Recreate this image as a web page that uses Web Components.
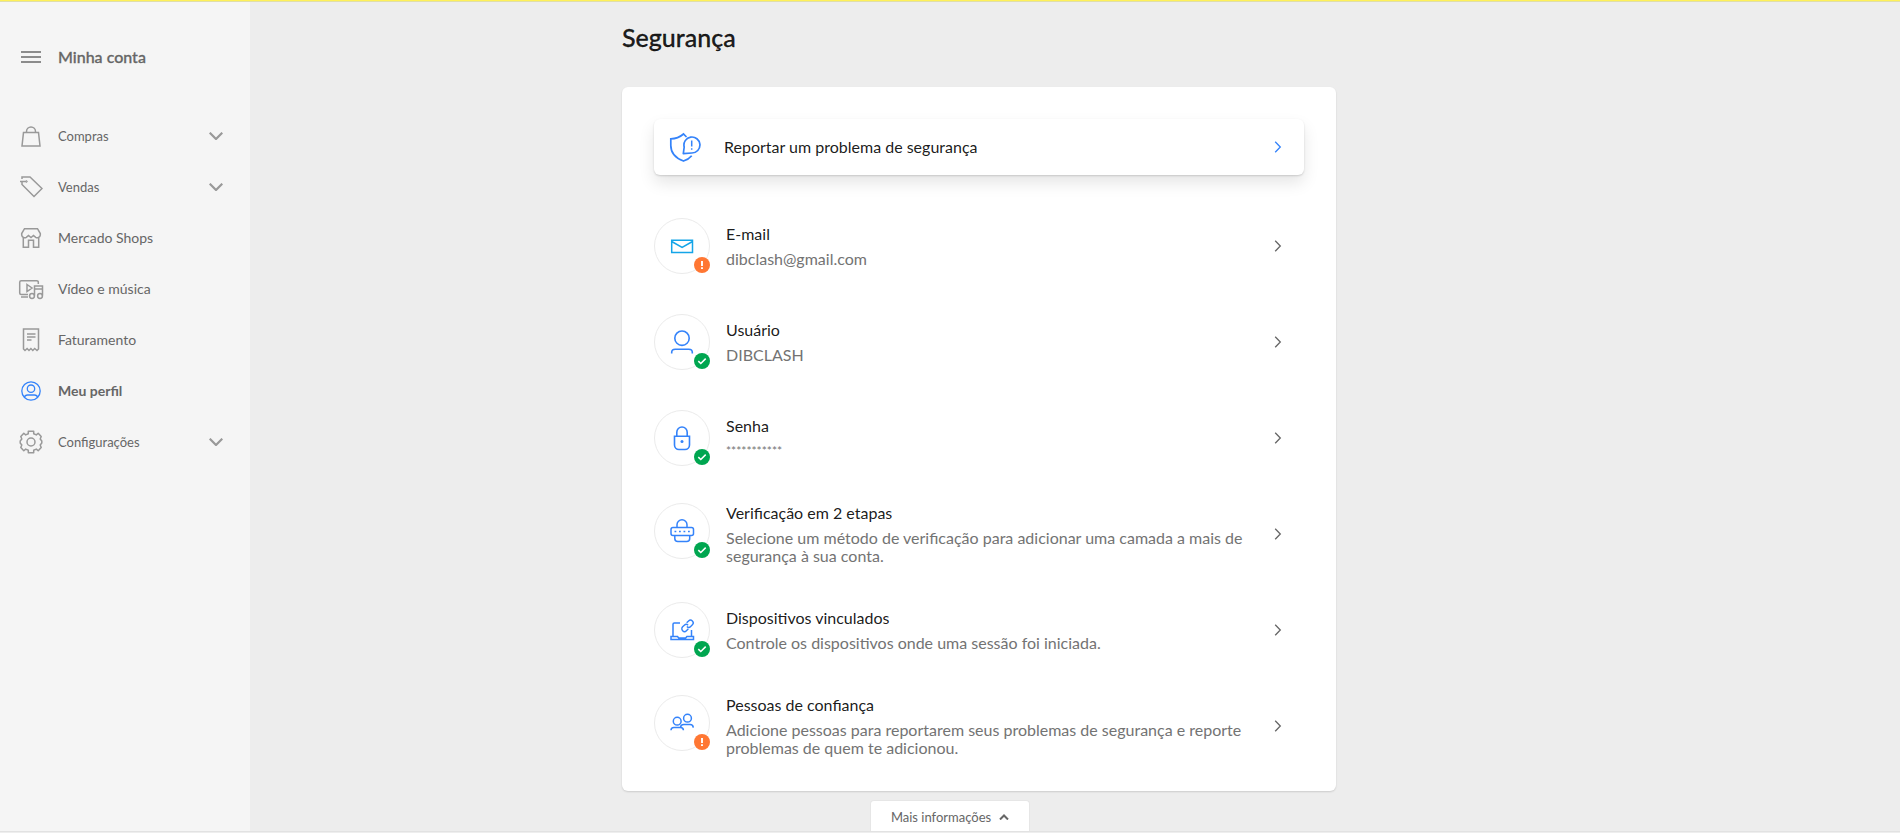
<!DOCTYPE html>
<html lang="pt-BR">
<head>
<meta charset="utf-8">
<meta name="viewport" content="width=device-width, initial-scale=1">
<title>Segurança</title>
<style>
html, body { margin: 0; }
body { font-family: Lato, "Open Sans", sans-serif; font-size: 16px; color: rgba(0,0,0,.9); background: #ededed; }
</style>
</head>
<body>
<script>
const ICONS = {
  menu: [20, 12, '<path d="M0 1h20M0 6h20M0 11h20" stroke-width="2"/>'],
  bag: [24, 24, '<path d="M4.500 8.500h15l1.500 13.500H3z M7.500 8.500V7.500a4.500 4.500 0 0 1 9 0v1" stroke-width="1.500"/>'],
  tag: [24, 24, '<path d="M3 4V2h8L23 13.500 15 21.500 3 9.500V7" stroke-width="1.500"/><path d="M1 6.500h6.500" stroke-width="1.500"/><circle cx="7.500" cy="6.500" r=".8" stroke-width="1"/>'],
  shop: [24, 24, '<path d="M5.500 2.700h13l2.800 4.800v1.700a3 3 0 0 1-4.600 2.100L14.500 9.500 12 11.500 9.500 9.500 7.300 11.300a3 3 0 0 1-4.600-2.100V7.500z M4.300 11.800v9.400h5.200v-7h5v7h5.200v-9.400" stroke-width="1.500"/>'],
  media: [26, 24, '<path d="M10 17.500H3.200a1.500 1.500 0 0 1-1.500-1.500V5.200a1.500 1.500 0 0 1 1.500-1.500h15.600a1.500 1.500 0 0 1 1.500 1.500V7 M3 20h7M9 7.500l5 3.500-5 3.500z" stroke-width="1.500"/><path d="M16.500 18.500V9h8v9.500M16.500 12h8" stroke-width="1.500"/><circle cx="14" cy="19" r="2.400" stroke-width="1.500"/><circle cx="22" cy="19" r="2.400" stroke-width="1.500"/>'],
  bill: [24, 24, '<path d="M4.500 1h15v20l-1.500 1.500-2.300-2-1.900 2-1.900-2-1.900 2-1.900-2-2.100 2-1.500-1.500z" stroke-width="1.500"/><path d="M8 6h8.500M8 9h8.500M8 12h4.500" stroke-width="1.400"/>'],
  profile: [24, 24, '<circle cx="12" cy="12" r="9.200" stroke-width="1.300"/><circle cx="12" cy="9.700" r="3.700" stroke-width="1.300"/><path d="M5.500 18.300c.3-1.700 1.200-2.300 3-2.300h7c1.800 0 2.700.6 3 2.300" stroke-width="1.300"/>'],
  gear: [24, 24, '<path d="M9.300 1.200h5.400v2.600l2.600 1.100 1.900-1.700 3 3.200-1 2.600 1.600 2v2l-1.600 2 1 2.600-3 3.200-1.900-1.700-2.600 1.100v2.600H9.300v-2.600l-2.600-1.100-1.900 1.700-3-3.200 1-2.600-1.600-2v-2l1.600-2-1-2.600 3-3.200 1.900 1.700 2.600-1.100z" stroke-linejoin="round" stroke-width="1.500"/><circle cx="12" cy="12" r="4" stroke-width="1.500"/>'],
  down: [14, 8, '<path d="M.7.7 7 7 13.300.7" stroke-width="2.200"/>'],
  right: [8, 12, '<path d="m1.200.7 5.100 5.300-5.100 5.300" stroke-width="1.300"/>'],
  up: [10, 6, '<path d="m1 5.500 4-4 4 4" stroke-width="2"/>'],
  shield: [32, 32, '<path d="M17.500 6 14.500 3C10.500 6.500 6.500 7.800 1.800 7.800v6.700c0 7.700 5 12.700 12.700 15.500 3.700-1.200 6.300-3 8.200-5.300" stroke-width="1.700"/><path d="M14.300 22.700 15.200 16A8 8 0 1 1 22.800 22z" stroke-width="1.700" stroke-linejoin="round"/><path d="M22.700 9.500v6M22.700 17.200v1.500" stroke-width="1.500"/>'],
  mail: [28, 28, '<path d="M3.700 8.200h20.800v12.300H3.700z M3.700 9.500l10.400 6 10.400-6" stroke-width="1.500"/>'],
  user: [28, 28, '<circle cx="14" cy="10.200" r="7.200" stroke-width="1.600"/><path d="M3.700 25.500v-1.300c0-1.900 1.300-3 3.500-3h13.600c2.200 0 3.500 1.100 3.500 3v1.300" stroke-width="1.600"/>'],
  lock: [28, 28, '<path d="M6.500 12.300h15v8.700a4.500 4.500 0 0 1-4.500 4.500h-6a4.500 4.500 0 0 1-4.500-4.500z M8.800 12.300V8.200a5.200 5.200 0 0 1 10.400 0v4.100" stroke-width="1.600"/><circle cx="14" cy="17.500" r="1.500" fill="currentColor" stroke="none"/>'],
  code: [28, 28, '<rect x="3" y="10.500" width="22.500" height="8" rx="2" stroke-width="1.500"/><path d="M9 10.500V7.700a5 5 0 0 1 10 0v2.800 M6.800 18.500v3c0 1.700 1.200 3 3 3h8.900c1.800 0 3-1.300 3-3v-3" stroke-width="1.500"/><path d="M6.500 14.500h1.800M11 14.500h1.800M15.500 14.500h1.800M20 14.500h1.800" stroke-width="1.700"/>'],
  laptop: [28, 28, '<path d="M12 7H6.300A1.300 1.300 0 0 0 5 8.300v11.900M23.500 14v6.200M3 20.500h6.500l1.200 1.500h7l1.200-1.500h6.600v3H3z" stroke-width="1.500"/><g transform="rotate(-45 19.500 9.800)" stroke-width="1.400"><path d="M18 12.500h-2.700a2.700 2.700 0 0 1 0-5.400h2.400a2.700 2.700 0 0 1 2.700 2.700"/><path d="M21 7.100h2.700a2.700 2.700 0 0 1 0 5.400h-2.400a2.700 2.700 0 0 1-2.700-2.700"/></g>'],
  people: [28, 28, '<circle cx="9.200" cy="12.200" r="3.900" stroke-width="1.500"/><circle cx="19.500" cy="9.200" r="3.900" stroke-width="1.500"/><path d="M3 21.300c0-2 1-2.900 2.900-2.900h6.600c1.900 0 2.900.9 2.900 2.900 M12.500 18.300c.3-1.700 1.500-2.700 3.300-2.700h6.300c2 0 3 .9 3.200 3" stroke-width="1.500"/>'],
  ok: [16, 16, '<circle cx="8" cy="8" r="8" fill="#00a650" stroke="none"/><path d="m4.300 8.100 2.500 2.400 4.900-4.900" stroke="#fff" stroke-width="1.500"/>'],
  alert: [16, 16, '<circle cx="8" cy="8" r="8" fill="#ff7733" stroke="none"/><path d="M8 4v5M8 10.300v1.700" stroke="#fff" stroke-width="1.900"/>']
};

class UiIcon extends HTMLElement {
  connectedCallback() {
    const [w, h, body] = ICONS[this.getAttribute('name')];
    this.attachShadow({ mode: 'open' }).innerHTML =
      `<style>:host{display:block;flex:none}svg{display:block}</style>
       <svg width="${w}" height="${h}" viewBox="0 0 ${w} ${h}" fill="none" stroke="currentColor" aria-hidden="true">${body}</svg>`;
  }
}
customElements.define('ui-icon', UiIcon);

class NavItem extends HTMLElement {
  connectedCallback() {
    const expand = this.hasAttribute('expandable');
    const tag = expand ? 'button type="button" aria-expanded="false"' : 'a href="#"';
    this.attachShadow({ mode: 'open' }).innerHTML = `
      <style>
        :host { display: block; }
        a, button {
          box-sizing: border-box; width: 100%; height: 51px; margin: 0; border: 0; background: none;
          padding: 0 27px 0 19px; display: flex; align-items: center; gap: 15px;
          font: inherit; font-size: 14px; line-height: 20px; color: #666; text-align: left; text-decoration: none;
        }
        button { font-size: 13px; }
        .icon { width: 24px; display: flex; justify-content: center; color: #999; flex: none; }
        .label { flex: 1; }
        .arrow { color: #999; }
        :host([current]) .icon { color: #3483fa; }
        :host([current]) a { font-weight: 700; }
      </style>
      <${tag}><span class="icon"><ui-icon name="${this.getAttribute('icon')}"></ui-icon></span>
      <span class="label"><slot></slot></span>${expand ? '<ui-icon class="arrow" name="down"></ui-icon>' : ''}</${expand ? 'button' : 'a'}>`;
  }
}
customElements.define('nav-item', NavItem);

class SideMenu extends HTMLElement {
  connectedCallback() {
    this.attachShadow({ mode: 'open' }).innerHTML = `
      <style>
        :host { display: block; flex: none; width: 250px; background: #f5f5f5; }
        header { display: flex; align-items: center; gap: 17px; padding: 43px 21px 0; height: 24px; color: #666; }
        button { border: 0; padding: 0; background: none; color: #8c8c8c; }
        strong { font-size: 16px; line-height: 24px; font-weight: 500; -webkit-text-stroke: .3px; }
        nav { padding-top: 41px; }
      </style>
      <header><button type="button" aria-label="Menu"><ui-icon name="menu"></ui-icon></button><strong>Minha conta</strong></header>
      <nav aria-label="Minha conta"><slot></slot></nav>`;
  }
}
customElements.define('side-menu', SideMenu);

class ReportLink extends HTMLElement {
  connectedCallback() {
    this.attachShadow({ mode: 'open' }).innerHTML = `
      <style>
        :host { display: block; }
        a {
          display: flex; align-items: center; height: 56px; padding: 0 22px 0 15px; gap: 23px; border-radius: 6px;
          background: #fff; color: inherit; text-decoration: none;
          box-shadow: 0 8px 16px rgba(0,0,0,.1), 0 1px 2px rgba(0,0,0,.15);
        }
        span { flex: 1; line-height: 20px; }
        ui-icon { color: #3483fa; }
      </style>
      <a href="#"><ui-icon name="shield"></ui-icon><span><slot></slot></span><ui-icon name="right"></ui-icon></a>`;
  }
}
customElements.define('report-link', ReportLink);

class SecurityRow extends HTMLElement {
  connectedCallback() {
    this.attachShadow({ mode: 'open' }).innerHTML = `
      <style>
        :host { display: block; }
        a {
          display: flex; align-items: center; gap: 16px; min-height: 96px; padding-right: 22px;
          color: inherit; text-decoration: none;
        }
        .body { flex: 1; display: flex; align-items: center; gap: 16px; }
        .disc {
          position: relative; align-self: flex-start; flex: none; box-sizing: border-box; width: 56px; height: 56px;
          display: grid; place-items: center; border: 1px solid #ebebeb; border-radius: 50%; color: #3483fa;
        }
        :host([icon=mail]) .disc { color: #14a5e8; }
        .badge { position: absolute; right: -1px; bottom: 0; }
        .text { flex: 1; display: grid; gap: 6px; }
        .title { line-height: 20px; }
        .desc { line-height: 18px; color: #737373; }
        :host([masked]) .desc { font-size: 12px; }
        .arrow { color: #666; }
      </style>
      <a href="#">
        <span class="body">
          <span class="disc"><ui-icon name="${this.getAttribute('icon')}"></ui-icon><ui-icon class="badge" name="${this.getAttribute('status')}"></ui-icon></span>
          <span class="text"><span class="title"><slot name="title"></slot></span><span class="desc"><slot></slot></span></span>
        </span>
        <ui-icon class="arrow" name="right"></ui-icon>
      </a>`;
  }
}
customElements.define('security-row', SecurityRow);

class SecurityCard extends HTMLElement {
  connectedCallback() {
    this.attachShadow({ mode: 'open' }).innerHTML = `
      <style>
        :host { display: block; padding: 32px 32px 17px; border-radius: 6px; background: #fff; box-shadow: 0 1px 2px rgba(0,0,0,.14); }
        .rows { margin-top: 23px; }
      </style>
      <slot name="report"></slot><div class="rows"><slot></slot></div>`;
  }
}
customElements.define('security-card', SecurityCard);

class MoreInfo extends HTMLElement {
  connectedCallback() {
    this.attachShadow({ mode: 'open' }).innerHTML = `
      <style>
        :host { position: fixed; left: 0; right: 0; bottom: 0; display: flex; justify-content: center; border-bottom: 1px solid #eee; pointer-events: none; }
        .line { flex: 1; display: flex; justify-content: center; border-bottom: 1px solid #e2e2e2; }
        button {
          display: flex; align-items: center; gap: 8px; height: 31px; padding: 2px 20px 0; border: 1px solid #e6e6e6; border-bottom: 0;
          border-radius: 4px 4px 0 0; background: #fff; color: #666; font: inherit; font-size: 13px; line-height: 20px; pointer-events: auto;
        }
      </style>
      <div class="line"><button type="button"><slot></slot><ui-icon name="up"></ui-icon></button></div>`;
  }
}
customElements.define('more-info', MoreInfo);

class AccountPage extends HTMLElement {
  connectedCallback() {
    this.attachShadow({ mode: 'open' }).innerHTML = `
      <style>
        :host { display: flex; flex-direction: column; min-height: 100vh; }
        .top { height: 1px; background: #fff159; border-bottom: 1px solid #e0dfa8; }
        .columns { flex: 1; display: flex; }
        main { flex: 1; display: flex; justify-content: center; padding: 20px 192px 42px 0; }
        .content { width: 100%; max-width: 714px; }
        h1 { margin: 0 0 34px; font-size: 25px; line-height: 31px; font-weight: 500; -webkit-text-stroke: .3px; }
      </style>
      <div class="top"></div>
      <div class="columns">
        <slot name="menu"></slot>
        <main><div class="content"><h1>Segurança</h1><slot></slot></div></main>
      </div>
      <slot name="footer"></slot>`;
  }
}
customElements.define('account-page', AccountPage);
</script>

<account-page>
  <side-menu slot="menu">
    <nav-item icon="bag" expandable>Compras</nav-item>
    <nav-item icon="tag" expandable>Vendas</nav-item>
    <nav-item icon="shop">Mercado Shops</nav-item>
    <nav-item icon="media">Vídeo e música</nav-item>
    <nav-item icon="bill">Faturamento</nav-item>
    <nav-item icon="profile" current>Meu perfil</nav-item>
    <nav-item icon="gear" expandable>Configurações</nav-item>
  </side-menu>
  <security-card>
    <report-link slot="report">Reportar um problema de segurança</report-link>
    <security-row icon="mail" status="alert"><span slot="title">E-mail</span>dibclash@gmail.com</security-row>
    <security-row icon="user" status="ok"><span slot="title">Usuário</span>DIBCLASH</security-row>
    <security-row icon="lock" status="ok" masked><span slot="title">Senha</span>***********</security-row>
    <security-row icon="code" status="ok"><span slot="title">Verificação em 2 etapas</span>Selecione um método de verificação para adicionar uma camada a mais de segurança à sua conta.</security-row>
    <security-row icon="laptop" status="ok"><span slot="title">Dispositivos vinculados</span>Controle os dispositivos onde uma sessão foi iniciada.</security-row>
    <security-row icon="people" status="alert"><span slot="title">Pessoas de confiança</span>Adicione pessoas para reportarem seus problemas de segurança e reporte problemas de quem te adicionou.</security-row>
  </security-card>
  <more-info slot="footer">Mais informações</more-info>
</account-page>
</body>
</html>
